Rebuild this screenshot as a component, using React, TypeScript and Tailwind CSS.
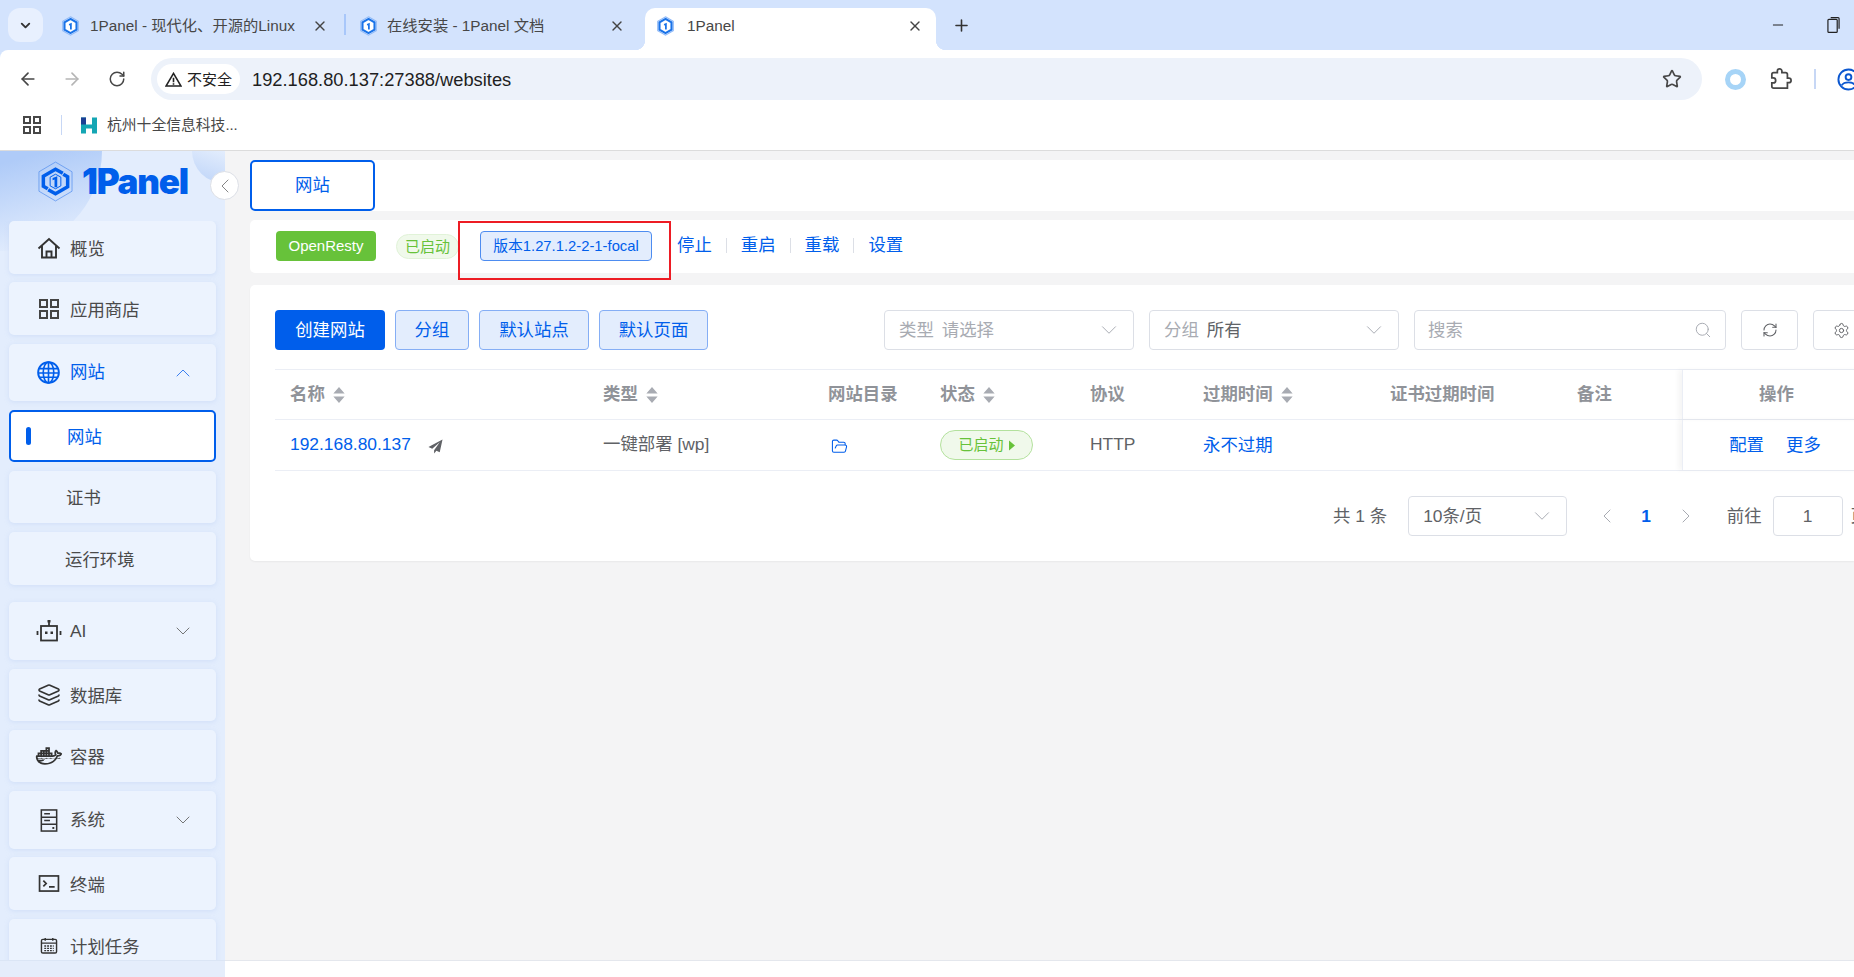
import { ArrowLeft, ArrowRight, RotateCw, Star, ChevronDown, ChevronUp, ChevronLeft, ChevronRight, Search, RefreshCw, Settings, Plus, X, Minus, Layers, FolderOpen } from 'lucide-react';
import { LiaDocker } from 'react-icons/lia';
import type { ReactNode } from 'react';

const font = "font-['Liberation_Sans','Noto_Sans_CJK_SC',sans-serif]";

const Favicon = () => (
  <svg viewBox="0 0 24 28" className="h-[20px] w-[17px] shrink-0">
    <path d="M12 1 23 7.500v13L12 27 1 20.500V7.500z" fill="#fff" stroke="#8db8f8" strokeWidth="1.500" />
    <path d="M12 4 20.500 9v10L12 24l-8.500-5V9z" fill="#fff" stroke="#1a73e8" strokeWidth="3" />
    <path d="M9.800 11 13.800 9.500V19h-2.500v-6.200l-1.500.5z" fill="#1a73e8" />
  </svg>
);

const Logo = () => (
  <svg viewBox="0 0 36 42" className="h-[41px] w-[35px] shrink-0">
    <path d="M18 1 35 11v20L18 41 1 31V11z" fill="none" stroke="#5c94f0" strokeWidth="0.800" />
    <path d="M10 28.500 5.500 25.800V15.500L18 8.300l7.500 4.300" fill="none" stroke="#005eeb" strokeWidth="3.600" />
    <path d="M26 13.500 30.500 16.200v10.300L18 33.700l-7.500-4.300" fill="none" stroke="#005eeb" strokeWidth="3.600" />
    <path d="M18 13.500 23.500 16.500v9L18 28.500l-5.500-3v-9z" fill="none" stroke="#005eeb" strokeWidth="1" />
    <path d="M15 17.500 19.800 15.500V27H17v-8l-2 .8z" fill="#005eeb" />
  </svg>
);

const HomeIcon = () => (
  <svg viewBox="0 0 24 22" className="h-[22px] w-[24px]" fill="none" stroke="#333" strokeWidth="1.900">
    <path d="M1.500 11.500 12 2l10.500 9.500M5 9v11.500h14V9M9.500 20.500v-6h5v6" />
  </svg>
);

const GridIcon = () => (
  <svg viewBox="0 0 20 20" className="h-[20px] w-[20px]" fill="none" stroke="#444" strokeWidth="2">
    <rect x="1" y="1" width="7" height="7" />
    <rect x="12" y="1" width="7" height="7" />
    <rect x="1" y="12" width="7" height="7" />
    <rect x="12" y="12" width="7" height="7" />
  </svg>
);

const GlobeIcon = () => (
  <svg viewBox="0 0 24 24" className="h-[23px] w-[23px]" fill="none" stroke="#005eeb" strokeWidth="1.700">
    <circle cx="12" cy="12" r="10.800" strokeWidth="2" />
    <ellipse cx="12" cy="12" rx="5.500" ry="10.800" />
    <path d="M12 1v22M1.800 8h20.400M1.800 12.500h20.400M2.500 17h19" />
  </svg>
);

const BotIcon = () => (
  <svg viewBox="0 0 26 24" className="h-[24px] w-[26px]" fill="none" stroke="#333" strokeWidth="1.800">
    <rect x="5" y="7" width="16" height="14.500" />
    <path d="M13 7V3" />
    <rect x="11.500" y="1" width="3" height="2.500" fill="#333" stroke="none" />
    <path d="M1.500 12v4M24.500 12v4" />
    <rect x="9" y="12.500" width="2.500" height="2.500" fill="#333" stroke="none" />
    <rect x="14.500" y="12.500" width="2.500" height="2.500" fill="#333" stroke="none" />
  </svg>
);

const ServerIcon = () => (
  <svg viewBox="0 0 18 24" className="h-[23px] w-[18px]" fill="none" stroke="#333" strokeWidth="1.600">
    <rect x="1" y="1" width="16" height="22" />
    <path d="M1 8.500h16M1 16h16M4 5h6M4 12h6" />
    <rect x="12.500" y="18.800" width="2" height="2" fill="#333" stroke="none" />
  </svg>
);

const TerminalIcon = () => (
  <svg viewBox="0 0 22 18" className="h-[17px] w-[22px]" fill="none" stroke="#333" strokeWidth="1.800">
    <rect x="1" y="1" width="20" height="16" />
    <path d="M5 6l3 3-3 3M11 12.500h6" />
  </svg>
);

const CalendarIcon = () => (
  <svg viewBox="0 0 18 18" className="h-[17px] w-[18px]" fill="none" stroke="#333" strokeWidth="1.500">
    <rect x="1" y="2.500" width="16" height="14.500" rx="1.500" />
    <path d="M1 6.500h16M5 1v3M13 1v3" />
    <path d="M4 9.500h10M4 12h10M4 14.500h10" strokeDasharray="2 1" strokeWidth="1.400" />
  </svg>
);

const Caret = () => (
  <svg viewBox="0 0 12 17" className="ml-[8px] h-[16px] w-[12px] shrink-0" fill="#a8abb2">
    <path d="M6 0 12 7H0zM6 17 0 10h12z" />
  </svg>
);

type Item = { label: string; icon?: ReactNode; box: string; pad: string; arrow?: 'up' | 'down'; active?: boolean; selected?: boolean };

const navItems: Item[] = [
  { label: '概览', icon: <HomeIcon />, box: 'mt-0 h-[53px]', pad: 'pl-[28px]' },
  { label: '应用商店', icon: <GridIcon />, box: 'mt-[8px] h-[53px]', pad: 'pl-[28px]' },
  { label: '网站', icon: <GlobeIcon />, box: 'mt-[9px] h-[57px]', pad: 'pl-[28px]', arrow: 'up', active: true },
  { label: '网站', box: 'mt-[9px] h-[52px]', pad: 'pl-[56px]', selected: true },
  { label: '证书', box: 'mt-[9px] h-[52px]', pad: 'pl-[57px]' },
  { label: '运行环境', box: 'mt-[9px] h-[53px]', pad: 'pl-[56px]' },
  { label: 'AI', icon: <BotIcon />, box: 'mt-[17px] h-[58px]', pad: 'pl-[28px]', arrow: 'down' },
  { label: '数据库', icon: <Layers size={24} color="#333" strokeWidth={1.6} />, box: 'mt-[9px] h-[52px]', pad: 'pl-[28px]' },
  { label: '容器', icon: <LiaDocker size={28} color="#333" />, box: 'mt-[9px] h-[52px]', pad: 'pl-[28px]' },
  { label: '系统', icon: <ServerIcon />, box: 'mt-[9px] h-[58px]', pad: 'pl-[28px]', arrow: 'down' },
  { label: '终端', icon: <TerminalIcon />, box: 'mt-[8px] h-[53px]', pad: 'pl-[28px]' },
  { label: '计划任务', icon: <CalendarIcon />, box: 'mt-[9px] h-[53px]', pad: 'pl-[28px]' },
];

const NavRow = ({ item }: { item: Item }) => (
  <div
    className={`${item.box} ${item.pad} relative flex shrink-0 items-center rounded-[5px] text-[17.400px] ${
      item.selected
        ? 'border-2 border-[#005eeb] bg-white text-[#005eeb]'
        : 'bg-[#ecf3fe] shadow-[0_1px_4px_rgba(190,210,245,0.5)]'
    } ${item.active ? 'text-[#005eeb]' : ''} ${!item.selected && !item.active ? 'text-[#4a4a4a]' : ''}`}
  >
    {item.selected && <span className="absolute left-[15px] top-[15px] h-[18px] w-[5px] rounded-full bg-[#005eeb]" />}
    {item.icon && <span className="flex w-[33px] shrink-0 -translate-x-[5px] items-center justify-center">{item.icon}</span>}
    <span className={item.arrow ? '' : 'pt-[3px]'}>{item.label}</span>
    {item.arrow === 'up' && <ChevronUp size={24} color="#3b7ff0" strokeWidth={1} className="absolute right-[21px]" />}
    {item.arrow === 'down' && <ChevronDown size={24} color="#666" strokeWidth={0.900} className="absolute right-[21px]" />}
  </div>
);

const Tab = ({ title, box, gap, active }: { title: string; box: string; gap: string; active?: boolean }) => (
  <div className={`${box} relative flex h-[42px] shrink-0 items-center pb-[6px] text-[15.300px] text-[#474747] ${active ? 'rounded-t-[10px] bg-white' : ''}`}>
    {active && <span className="absolute bottom-0 left-[-10px] h-[10px] w-[10px] bg-[radial-gradient(circle_at_0_0,#d3e3fd_10px,#ffffff_10.500px)]" />}
    {active && <span className="absolute bottom-0 right-[-10px] h-[10px] w-[10px] bg-[radial-gradient(circle_at_100%_0,#d3e3fd_10px,#ffffff_10.500px)]" />}
    <Favicon />
    <span className={`${gap} flex-1 overflow-hidden whitespace-nowrap`}>{title}</span>
    <X size={16} color="#444" strokeWidth={2} />
  </div>
);

const LightButton = ({ label, width }: { label: string; width: string }) => (
  <div className={`${width} flex h-[40px] items-center justify-center rounded-[4px] border border-[#85aef5] bg-[#e3edfd] text-[17.400px] text-[#005eeb]`}>
    {label}
  </div>
);

const Select = ({ prefix, value, muted }: { prefix: string; value: string; muted?: boolean }) => (
  <div className="flex h-[40px] w-[250px] items-center rounded-[4px] border border-[#dcdfe6] bg-white px-[14px] text-[17.400px]">
    <span className="text-[#a8abb2]">{prefix}</span>
    <span className={`ml-[8px] ${muted ? 'text-[#a8abb2]' : 'text-[#606266]'}`}>{value}</span>
    <ChevronDown size={26} color="#a8abb2" strokeWidth={0.900} className="ml-auto mr-[-3px]" />
  </div>
);

const cols = 'grid grid-cols-[313px_225px_112px_150px_113px_187px_187px_120px_188px]';
const headerCell = 'flex h-[49px] items-center text-[17.400px] font-bold text-[#909399]';
const bodyCell = 'flex h-[50px] items-center text-[17.400px]';
const leftCell = 'pl-[15px]';
const fixedCol = 'justify-center border-l border-[#ebeef5] shadow-[-4px_0_5px_rgba(0,0,0,0.04)]';

export default function App() {
  return (
    <div className={`${font} flex h-[977px] w-[1854px] flex-col overflow-hidden bg-[#d3e3fd]`}>
      {/* browser tabs */}
      <div className="flex h-[50px] shrink-0 items-end pl-[8px]">
        <div className="mb-[8px] flex h-[34px] w-[35px] shrink-0 items-center justify-center rounded-[12px] bg-[#e8f0fe]">
          <ChevronDown size={15} color="#333" strokeWidth={3} />
        </div>
        <Tab title="1Panel - 现代化、开源的Linux" box="w-[301px] pl-[19px] pr-[16px]" gap="ml-[11px]" />
        <div className="mb-[15px] h-[21px] w-[2px] shrink-0 bg-[#a8c7fa]" />
        <Tab title="在线安装 - 1Panel 文档" box="w-[299px] pl-[14px] pr-[20px]" gap="ml-[10px]" />
        <Tab title="1Panel" box="w-[291px] pl-[12px] pr-[13px]" gap="ml-[13px]" active />
        <div className="mb-[8px] ml-[16px] flex h-[34px] items-center">
          <Plus size={19} color="#333" strokeWidth={2} />
        </div>
        <div className="mb-[13px] ml-auto flex h-[24px] items-center">
          <Minus size={16} color="#222" strokeWidth={1.500} />
          <svg viewBox="0 0 14 18" className="ml-[41px] mr-[14px] h-[18px] w-[13px]" fill="none" stroke="#222" strokeWidth="1.300">
            <rect x="1" y="3" width="10" height="14" rx="1" />
            <path d="M4 1h8a1 1 0 0 1 1 1v11" />
          </svg>
        </div>
      </div>

      {/* address bar */}
      <div className="flex h-[50px] shrink-0 items-center rounded-tl-[8px] bg-white pt-[8px]">
        <ArrowLeft size={20} color="#474747" strokeWidth={2} className="ml-[18px] shrink-0" />
        <ArrowRight size={20} color="#b5b5b5" strokeWidth={2} className="ml-[24px] shrink-0" />
        <RotateCw size={18} color="#474747" strokeWidth={2} className="ml-[26px] shrink-0" />
        <div className="ml-[25px] flex h-[42px] w-[1551px] shrink-0 items-center rounded-full bg-[#edf2fa] pl-[6px]">
          <div className="flex h-[30px] w-[83px] items-center justify-center rounded-full bg-white text-[15px] text-[#1f1f1f]">
            <svg viewBox="0 0 18 16" className="mr-[5px] h-[15px] w-[17px]" fill="none" stroke="#222" strokeWidth="1.700">
              <path d="M9 1.500 17 15H1zM9 6v5M9 12v1.500" />
            </svg>
            <span className="pt-[2px]">不安全</span>
          </div>
          <span className="ml-[12px] pt-[1px] text-[18.300px] text-[#1f1f1f]">192.168.80.137:27388/websites</span>
          <Star size={20} color="#474747" strokeWidth={2} className="ml-auto mr-[20px]" />
        </div>
        <div className="ml-[23px] h-[21px] w-[21px] shrink-0 rounded-full border-[5px] border-[#a6d4f7] bg-white" />
        <svg viewBox="0 0 24 24" className="ml-[24px] h-[22px] w-[22px] shrink-0" fill="none" stroke="#474747" strokeWidth="1.900">
          <path d="M20.500 11H19V7c0-1.100-.9-2-2-2h-4V3.500C13 2.120 11.880 1 10.500 1S8 2.120 8 3.500V5H4c-1.100 0-1.990.9-1.990 2v3.800H3.500c1.490 0 2.700 1.210 2.700 2.700s-1.210 2.700-2.700 2.700H2V20c0 1.100.9 2 2 2h15v-6h1.500c1.380 0 2.500-1.120 2.500-2.500S21.880 11 20.500 11z" />
        </svg>
        <div className="ml-[22px] h-[20px] w-[2px] shrink-0 bg-[#c7d7f5]" />
        <svg viewBox="0 0 24 24" className="ml-[21px] h-[23px] w-[23px] shrink-0" fill="none" stroke="#0b57d0" strokeWidth="2">
          <circle cx="12" cy="12" r="10.500" />
          <circle cx="12" cy="9.500" r="3" />
          <path d="M5 18c1.500-2.500 4-3 7-3s5.500.5 7 3" />
        </svg>
      </div>

      {/* bookmarks */}
      <div className="flex h-[51px] shrink-0 items-center border-b border-[#dcdcdc] bg-white">
        <svg viewBox="0 0 18 18" className="ml-[23px] h-[18px] w-[18px]" fill="none" stroke="#474747" strokeWidth="2">
          <rect x="1" y="1" width="6" height="6" />
          <rect x="11" y="1" width="6" height="6" />
          <rect x="1" y="11" width="6" height="6" />
          <rect x="11" y="11" width="6" height="6" />
        </svg>
        <div className="ml-[20px] h-[20px] w-px bg-[#c7d7f5]" />
        <svg viewBox="0 0 18 18" className="ml-[18px] h-[19px] w-[18px]">
          <path d="M1 1h5v7h6V1h5v16h-5v-5H6v5H1z" fill="#14a6b4" />
          <path d="M1 1h5v7H1z" fill="#1c3f94" />
        </svg>
        <span className="ml-[9px] text-[14.800px] text-[#474747]">杭州十全信息科技...</span>
      </div>

      <div className="flex min-h-0 flex-1 overflow-hidden">
        {/* sidebar */}
        <aside className="relative flex w-[225px] shrink-0 flex-col overflow-visible bg-[#e3edfd]">
          <div className="absolute left-0 top-0 h-[100px] w-[102px] rounded-br-full bg-[linear-gradient(165deg,#afcbf8_10%,#e3edfd_85%)]" />
          <div className="absolute right-0 top-0 h-[32px] w-[33px] rounded-bl-full bg-[linear-gradient(200deg,#e3edfd,#bcd3f8)]" />
          <div className="relative flex h-[70px] shrink-0 items-center pb-[9px] pl-[38px]">
            <Logo />
            <span className="ml-[9px] font-['Inter',sans-serif] text-[35px] font-black tracking-[-1.200px] text-[#005eeb]">1Panel</span>
          </div>
          <nav className="relative flex flex-1 flex-col overflow-hidden px-[9px]">
            {navItems.map((item, i) => (
              <NavRow key={i} item={item} />
            ))}
          </nav>
          <div className="relative h-[17px] shrink-0 border-t border-[#dbe5f5] bg-[#e5edfb]" />
          <div className="absolute left-[210px] top-[20px] z-10 flex h-[29px] w-[29px] items-center justify-center rounded-full border border-[#dcdfe6] bg-white">
            <ChevronLeft size={24} color="#777" strokeWidth={0.900} />
          </div>
        </aside>

        {/* main */}
        <main className="flex min-w-0 flex-1 flex-col">
          <div className="flex flex-1 flex-col overflow-hidden bg-[#f4f4f5] pl-[25px] pt-[9px]">
            <div className="h-[51px] shrink-0 rounded-l-[5px] bg-white">
              <div className="flex h-[51px] w-[125px] items-center justify-center rounded-[5px] border-2 border-[#005eeb] text-[17.400px] text-[#005eeb]">
                网站
              </div>
            </div>

            <div className="relative mt-[9px] flex h-[53px] shrink-0 items-start rounded-l-[5px] bg-white pl-[26px] pt-[11px]">
              <div className="flex h-[30px] w-[100px] items-center justify-center rounded-[4px] bg-[#67c23a] pt-[1px] text-[15px] text-white">OpenResty</div>
              <div className="ml-[20px] mt-[3px] flex h-[25px] w-[63px] items-center justify-center rounded-full border border-[#e1f3d8] bg-[#f0f9eb] pt-[1px] text-[15px] text-[#67c23a]">
                已启动
              </div>
              <div className="ml-[21px] flex h-[30px] w-[172px] items-center justify-center rounded-[4px] border border-[#4d8cf0] bg-[#e3edfd] pt-[1px] text-[14.800px] text-[#005eeb]">
                版本1.27.1.2-2-1-focal
              </div>
              <div className="ml-[25px] flex h-[29px] items-center text-[17.400px] text-[#005eeb]">
                <span>停止</span>
                <span className="mx-[14px] h-[15px] w-px bg-[#dcdfe6]" />
                <span>重启</span>
                <span className="mx-[14px] h-[15px] w-px bg-[#dcdfe6]" />
                <span>重载</span>
                <span className="mx-[14px] h-[15px] w-px bg-[#dcdfe6]" />
                <span>设置</span>
              </div>
              {/* red annotation drawn over the page */}
              <div className="absolute left-[208px] top-[1px] h-[59px] w-[213px] border-2 border-[#ed1c24]" />
            </div>

            <div className="mt-[12px] h-[276px] shrink-0 overflow-hidden rounded-l-[5px] bg-white pl-[25px] pt-[25px] shadow-[0_1px_2px_rgba(0,0,0,0.05)]">
              <div className="w-[1595px]">
                <div className="flex items-center">
                  <div className="flex h-[40px] w-[110px] items-center justify-center rounded-[4px] bg-[#005eeb] text-[17.400px] text-white">创建网站</div>
                  <div className="ml-[10px] flex gap-[10px]">
                    <LightButton label="分组" width="w-[74px]" />
                    <LightButton label="默认站点" width="w-[110px]" />
                    <LightButton label="默认页面" width="w-[109px]" />
                  </div>
                  <div className="ml-auto flex items-center gap-[15px]">
                    <Select prefix="类型" value="请选择" muted />
                    <Select prefix="分组" value="所有" />
                    <div className="flex h-[40px] w-[312px] items-center rounded-[4px] border border-[#dcdfe6] bg-white px-[13px] text-[17.400px] text-[#a8abb2]">
                      搜索
                      <Search size={18} color="#a8abb2" strokeWidth={1.300} className="ml-auto" />
                    </div>
                    <div className="flex h-[40px] w-[57px] items-center justify-center rounded-[4px] border border-[#dcdfe6]">
                      <RefreshCw size={16} color="#606266" strokeWidth={1.600} />
                    </div>
                    <div className="flex h-[40px] w-[57px] items-center justify-center rounded-[4px] border border-[#dcdfe6]">
                      <Settings size={17} color="#606266" strokeWidth={1.400} />
                    </div>
                  </div>
                </div>

                <div className="mt-[19px] border-t border-[#ebeef5]">
                  <div className={`${cols} border-b border-[#ebeef5]`}>
                    <div className={`${headerCell} ${leftCell}`}>名称<Caret /></div>
                    <div className={`${headerCell} ${leftCell}`}>类型<Caret /></div>
                    <div className={`${headerCell} ${leftCell}`}>网站目录</div>
                    <div className={`${headerCell} ${leftCell}`}>状态<Caret /></div>
                    <div className={`${headerCell} ${leftCell}`}>协议</div>
                    <div className={`${headerCell} ${leftCell}`}>过期时间<Caret /></div>
                    <div className={`${headerCell} ${leftCell}`}>证书过期时间</div>
                    <div className={`${headerCell} ${leftCell}`}>备注</div>
                    <div className={`${headerCell} ${fixedCol}`}>操作</div>
                  </div>
                  <div className={`${cols} border-b border-[#ebeef5] text-[#606266]`}>
                    <div className={`${bodyCell} ${leftCell}`}>
                      <span className="pb-[2px] text-[#005eeb]">192.168.80.137</span>
                      <svg viewBox="0 0 16 16" className="ml-[17px] mt-[3px] h-[15px] w-[15px]" fill="#606266">
                        <path d="M15.500.5 .5 8.500l4 2 8-7-6 8.500v3.500l2.500-3 3.500 1.500z" />
                      </svg>
                    </div>
                    <div className={`${bodyCell} ${leftCell} pb-[2px]`}>一键部署 [wp]</div>
                    <div className={`${bodyCell} ${leftCell}`}>
                      <FolderOpen size={17} color="#005eeb" strokeWidth={1.500} className="ml-[3px] mt-[2px]" />
                    </div>
                    <div className={`${bodyCell} ${leftCell}`}>
                      <div className="flex h-[30px] w-[93px] items-center justify-center rounded-full border border-[#b3e19d] bg-[#f0f9eb] text-[15px] text-[#67c23a]">
                        已启动
                        <svg viewBox="0 0 6 10" className="ml-[5px] h-[11px] w-[6px]" fill="#67c23a">
                          <path d="M0 0 6 5 0 10z" />
                        </svg>
                      </div>
                    </div>
                    <div className={`${bodyCell} ${leftCell} pb-[2px]`}>HTTP</div>
                    <div className={`${bodyCell} ${leftCell} text-[#005eeb]`}>永不过期</div>
                    <div className={bodyCell} />
                    <div className={bodyCell} />
                    <div className={`${bodyCell} ${fixedCol} gap-[22px] pr-[3px] text-[#005eeb]`}>
                      <span>配置</span>
                      <span>更多</span>
                    </div>
                  </div>
                </div>

                <div className="mt-[25px] flex h-[40px] items-center pl-[1058px] text-[17.400px] text-[#606266]">
                  <span>共 1 条</span>
                  <div className="ml-[21px] flex h-[40px] w-[159px] shrink-0 items-center rounded-[4px] border border-[#dcdfe6] px-[14px]">
                    10条/页
                    <ChevronDown size={26} color="#a8abb2" strokeWidth={0.900} className="ml-auto mr-[-3px]" />
                  </div>
                  <ChevronLeft size={24} color="#a8abb2" strokeWidth={1} className="ml-[28px] shrink-0" />
                  <span className="ml-[22px] font-bold text-[#005eeb]">1</span>
                  <ChevronRight size={24} color="#a8abb2" strokeWidth={1} className="ml-[23px] shrink-0" />
                  <span className="ml-[29px] shrink-0">前往</span>
                  <div className="ml-[11px] flex h-[40px] w-[70px] shrink-0 items-center justify-center rounded-[4px] border border-[#dcdfe6]">1</div>
                  <span className="ml-[8px] shrink-0">页</span>
                </div>
              </div>
            </div>
          </div>
          <div className="h-[17px] shrink-0 border-t border-[#e4e7ed] bg-white" />
        </main>
      </div>
    </div>
  );
}
